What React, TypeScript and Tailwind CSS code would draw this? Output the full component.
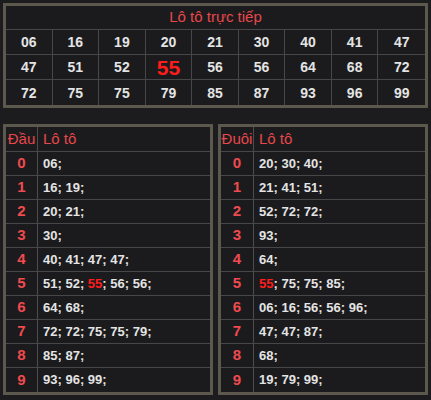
import React from 'react';

const top = [
  ['06', '16', '19', '20', '21', '30', '40', '41', '47'],
  ['47', '51', '52', '55', '56', '56', '64', '68', '72'],
  ['72', '75', '75', '79', '85', '87', '93', '96', '99'],
];

const dau = [
  ['06'],
  ['16', '19'],
  ['20', '21'],
  ['30'],
  ['40', '41', '47', '47'],
  ['51', '52', '55', '56', '56'],
  ['64', '68'],
  ['72', '72', '75', '75', '79'],
  ['85', '87'],
  ['93', '96', '99'],
];

const duoi = [
  ['20', '30', '40'],
  ['21', '41', '51'],
  ['52', '72', '72'],
  ['93'],
  ['64'],
  ['55', '75', '75', '85'],
  ['06', '16', '56', '56', '96'],
  ['47', '47', '87'],
  ['68'],
  ['19', '79', '99'],
];

const font = { fontFamily: '"Liberation Sans", Arial, sans-serif' };

const LotoBox = ({ label, rows, labelW }: { label: string; rows: string[][]; labelW: string }) => (
  <div className="flex-1 border-[3px] border-[#5d584d] bg-[#1b1b1d]">
    <div className="flex h-[25px] border-b border-[#474747] text-[15px] text-[#e8474c]">
      <div className={`${labelW} flex items-center justify-center border-r border-[#4d4d4d]`}>{label}</div>
      <div className="flex items-center pl-[5px]">Lô tô</div>
    </div>
    {rows.map((nums, i) => (
      <div key={i} className="flex h-[24px] border-b border-[#474747] last:border-b-0">
        <div className={`${labelW} flex items-center justify-center border-r border-[#4d4d4d] text-[15px] font-bold text-[#ef4a4f]`}>
          {i}
        </div>
        <div className="flex items-center pl-[5px] text-[13px] font-bold text-[#e4e4e4]">
          {nums.map((n, j) => (
            <span key={j} className="whitespace-pre">
              <span className={n === '55' ? 'text-[#ff1c1c]' : ''}>{n}</span>
              {j < nums.length - 1 ? '; ' : ';'}
            </span>
          ))}
        </div>
      </div>
    ))}
  </div>
);

export default function App() {
  return (
    <div className="w-[431px] h-[400px] bg-[#1c1c1e] p-[3px]" style={font}>
      <div className="border-[3px] border-[#5d584d] bg-[#1b1b1d]">
        <div className="flex h-[24px] items-center justify-center border-b border-[#474747] text-[15px] text-[#e8474c]">
          Lô tô trực tiếp
        </div>
        {top.map((row, i) => (
          <div key={i} className="grid h-[25px] grid-cols-9 overflow-hidden border-b border-[#474747] last:border-b-0">
            {row.map((n, j) => (
              <div
                key={j}
                className={`flex h-full items-center justify-center leading-none border-[#474747] ${j < 8 ? 'border-r' : ''} ${
                  i === 1 && j === 3 ? 'text-[21px] text-[#ff1c1c]' : 'text-[14px] text-[#e4e4e4]'
                } font-bold`}
              >
                {n}
              </div>
            ))}
          </div>
        ))}
      </div>
      <div className="mt-[16px] flex gap-[5px]">
        <LotoBox label="Đầu" rows={dau} labelW="w-[32px]" />
        <LotoBox label="Đuôi" rows={duoi} labelW="w-[33px]" />
      </div>
    </div>
  );
}
